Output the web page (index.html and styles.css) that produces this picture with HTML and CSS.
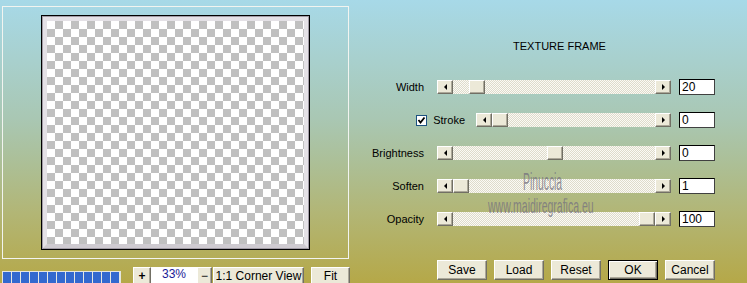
FILE: index.html
```html
<!DOCTYPE html>
<html lang="en">
<head>
  <meta charset="UTF-8">
  <title>Texture Frame</title>
  <link rel="stylesheet" href="styles.css">
</head>
<body>
  <div class="dialog">
    <div class="left">
      <div class="preview">
        <div class="image">
          <div class="frame">
            <div class="checker"></div>
          </div>
        </div>
      </div>
      <div class="view-bar">
        <div class="progress">
          <span></span><span></span><span></span><span></span><span></span><span></span><span></span>
          <span></span><span></span><span></span><span></span><span></span><span></span>
        </div>
        <div class="btn plus">+</div>
        <div class="zoom-field">33%</div>
        <div class="btn minus">&minus;</div>
        <div class="btn corner">1:1 Corner View</div>
        <div class="btn fit">Fit</div>
      </div>
    </div>

    <div class="controls">
      <div class="title">TEXTURE FRAME</div>
      <div class="rows">
        <div class="row">
          <div class="label">Width</div>
          <div class="slider">
            <div class="arrow left-arrow"></div>
            <div class="track"><div class="thumb" style="margin-left:16px"></div></div>
            <div class="arrow right-arrow"></div>
          </div>
          <div class="value">20</div>
        </div>
        <div class="row stroke">
          <div class="label">
            <span class="checkbox">
              <svg width="9" height="9" viewBox="0 0 9 9"><polyline points="1.5,4 3.5,6.5 7.5,1.5" fill="none" stroke="#000" stroke-width="1.8"/></svg>
            </span>
            Stroke
          </div>
          <div class="slider">
            <div class="arrow left-arrow"></div>
            <div class="track"><div class="thumb" style="margin-left:0"></div></div>
            <div class="arrow right-arrow"></div>
          </div>
          <div class="value">0</div>
        </div>
        <div class="row">
          <div class="label">Brightness</div>
          <div class="slider">
            <div class="arrow left-arrow"></div>
            <div class="track"><div class="thumb" style="margin-left:94px"></div></div>
            <div class="arrow right-arrow"></div>
          </div>
          <div class="value">0</div>
        </div>
        <div class="row">
          <div class="label">Soften</div>
          <div class="slider">
            <div class="arrow left-arrow"></div>
            <div class="track"><div class="thumb" style="margin-left:0"></div></div>
            <div class="arrow right-arrow"></div>
          </div>
          <div class="value">1</div>
        </div>
        <div class="row">
          <div class="label">Opacity</div>
          <div class="slider">
            <div class="arrow left-arrow"></div>
            <div class="track"><div class="thumb" style="margin-left:186px"></div></div>
            <div class="arrow right-arrow"></div>
          </div>
          <div class="value">100</div>
        </div>
      </div>
      <div class="actions">
        <div class="btn action">Save</div>
        <div class="btn action">Load</div>
        <div class="btn action">Reset</div>
        <div class="btn action default">OK</div>
        <div class="btn action">Cancel</div>
      </div>
    </div>

    <div class="watermark name">Pinuccia</div>
    <div class="watermark site">www.maidiregrafica.eu</div>
  </div>
</body>
</html>
```

FILE: styles.css
```css
:root {
  --face: #ece9d8;
  --shadow: #716f64;
  --shadow-soft: #aca899;
  --text: #000;
}
body {
  margin: 0;
  font-family: 'Liberation Sans', Arial, sans-serif;
  font-size: 11px;
  color: var(--text);
}
.dialog {
  position: relative;
  width: 747px;
  height: 283px;
  overflow: hidden;
  display: flex;
  background: linear-gradient(180deg, #a7d9e8 0%, #a9c7b3 42%, #acbf96 58%, #b2b676 75%, #b5a848 100%);
}

/* preview side */
.left {
  width: 350px;
  padding: 6px 0 0 2px;
  box-sizing: border-box;
  flex-shrink: 0;
}
.preview {
  width: 347px;
  height: 253px;
  box-sizing: border-box;
  border: 1px solid #f2f4f0;
  padding: 8px 0 0 38px;
}
.image {
  width: 269px;
  height: 235px;
  box-sizing: border-box;
  border: 2px solid #000;
  background: #fff;
}
.frame {
  height: 100%;
  box-sizing: border-box;
  border: 4px solid #e4e1e6;
  box-shadow: inset 0 0 0 1px #cfcad2, 0 0 0 1px #a29ca6;
  border-bottom-color: #cfcbd1;
}
.checker {
  height: 100%;
  background: conic-gradient(#c0c0c0 25%, #fff 0 50%, #c0c0c0 0 75%, #fff 0) 0 0 / 16px 16px;
}
.view-bar {
  display: flex;
  align-items: flex-start;
  margin-top: 8px;
  height: 18px;
}
.progress {
  display: flex;
  gap: 1px;
  width: 119px;
  height: 14px;
  margin-top: 4px;
  padding: 1px;
  box-sizing: border-box;
  background: #e4e6e0;
}
.progress span {
  width: 8px;
  background: #3269cf;
}
.btn {
  box-sizing: border-box;
  background: var(--face);
  border: 1px solid;
  border-color: #fff var(--shadow) var(--shadow) #fff;
  box-shadow: inset -1px -1px 0 var(--shadow-soft);
  display: flex;
  align-items: center;
  justify-content: center;
  height: 18px;
  font-size: 12px;
}
.plus {
  width: 18px;
  margin-left: 12px;
  font-weight: 700;
  font-size: 12px;
}
.zoom-field {
  width: 46px;
  height: 18px;
  background: #fff;
  color: #1a1a96;
  text-align: center;
  font-size: 12px;
  line-height: 14px;
}
.minus {
  width: 15px;
}
.corner {
  width: 91px;
  margin-left: 1px;
}
.fit {
  width: 39px;
  margin-left: 7px;
}

/* controls side */
.controls {
  flex: 1;
  padding-top: 40px;
}
.title {
  height: 13px;
  line-height: 13px;
  padding-left: 22px;
  text-align: center;
}
.rows {
  margin-top: 26px;
  display: flex;
  flex-direction: column;
  gap: 17px;
}
.row {
  display: flex;
  align-items: center;
  height: 16px;
}
.label {
  width: 74px;
  margin-right: 13px;
  text-align: right;
}
.slider {
  width: 234px;
  height: 14px;
  display: flex;
}
.row.stroke .label {
  width: 115px;
  margin-right: 11px;
  display: flex;
  justify-content: flex-end;
  align-items: center;
  gap: 6px;
}
.row.stroke .slider {
  width: 195px;
}
.checkbox {
  width: 11px;
  height: 11px;
  box-sizing: border-box;
  border: 1px solid #1c5180;
  background: #fff;
  display: flex;
  align-items: center;
  justify-content: center;
}
.arrow, .thumb {
  width: 16px;
  height: 14px;
  box-sizing: border-box;
  background: var(--face);
  border: 1px solid;
  border-color: #fff var(--shadow) var(--shadow) #fff;
  box-shadow: inset -1px -1px 0 var(--shadow-soft);
  flex-shrink: 0;
  display: flex;
  align-items: center;
  justify-content: center;
}
.arrow::before {
  content: "";
  border-top: 3px solid transparent;
  border-bottom: 3px solid transparent;
}
.left-arrow::before {
  border-right: 3px solid #000;
}
.right-arrow::before {
  border-left: 3px solid #000;
}
.track {
  flex: 1;
  display: flex;
  background: repeating-conic-gradient(#fbfaf5 0 25%, #dedbcb 0 50%) 0 0 / 2px 2px;
}
.value {
  width: 36px;
  height: 16px;
  margin-left: 8px;
  box-sizing: border-box;
  background: #fff;
  border: 1px solid #000;
  border-right-color: #404040;
  border-bottom-color: #404040;
  padding-left: 2px;
  font-size: 12px;
  line-height: 14px;
}
.actions {
  display: flex;
  gap: 7px;
  margin-top: 33px;
  padding-left: 87px;
}
.action {
  width: 50px;
  height: 20px;
}
.action.default {
  border: 1px solid #000;
  box-shadow: inset 1px 1px 0 #fff, inset -1px -1px 0 var(--shadow), inset -2px -2px 0 var(--shadow-soft);
}

/* watermark over the sliders */
.watermark {
  position: absolute;
  color: rgba(118, 115, 128, 0.8);
  transform-origin: left top;
  white-space: nowrap;
}
.watermark.name {
  left: 523px;
  top: 170px;
  font-size: 23px;
  line-height: 24px;
  transform: scaleX(0.45);
}
.watermark.site {
  left: 488px;
  top: 195px;
  font-size: 21px;
  line-height: 22px;
  transform: scaleX(0.5);
}
```
